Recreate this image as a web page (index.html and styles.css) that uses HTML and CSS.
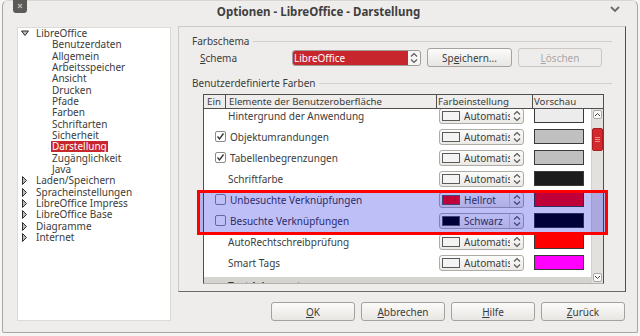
FILE: index.html
```html
<!DOCTYPE html>
<html lang="de">
<head>
  <meta charset="utf-8">
  <title>Optionen - LibreOffice - Darstellung</title>
  <link rel="stylesheet" href="styles.css">
</head>
<body>
  <div class="window">
    <div class="titlebar">
      <span class="close">
        <svg width="14" height="13" viewBox="0 0 14 13"><path d="M5 4 L9 8 M9 4 L5 8" stroke="#b9b7b4" stroke-width="1.2" fill="none"/></svg>
      </span>
      <span class="title">Optionen - LibreOffice - Darstellung</span>
      <svg class="chevron" width="10" height="6" viewBox="0 0 10 6"><path d="M1 1 L5 5 L9 1" stroke="#6b6a68" stroke-width="1.8" fill="none"/></svg>
    </div>

    <div class="main">
      <div class="tree">
        <div class="node"><svg class="tw" width="15" height="11" viewBox="0 0 15 11"><polygon points="0.5,3 7.5,3 4,7.5" fill="#bdbbb8" stroke="#2e2e2e"/></svg>LibreOffice</div>
        <div class="leaf">Benutzerdaten</div>
        <div class="leaf">Allgemein</div>
        <div class="leaf">Arbeitsspeicher</div>
        <div class="leaf">Ansicht</div>
        <div class="leaf">Drucken</div>
        <div class="leaf">Pfade</div>
        <div class="leaf">Farben</div>
        <div class="leaf">Schriftarten</div>
        <div class="leaf">Sicherheit</div>
        <div class="leaf"><span class="sel">Darstellung</span></div>
        <div class="leaf">Zugänglichkeit</div>
        <div class="leaf">Java</div>
        <div class="node"><svg class="tw" width="15" height="11" viewBox="0 0 15 11"><polygon points="1.5,1.5 5.5,5.5 1.5,9.5" fill="#bdbbb8" stroke="#2e2e2e"/></svg>Laden/Speichern</div>
        <div class="node"><svg class="tw" width="15" height="11" viewBox="0 0 15 11"><polygon points="1.5,1.5 5.5,5.5 1.5,9.5" fill="#bdbbb8" stroke="#2e2e2e"/></svg>Spracheinstellungen</div>
        <div class="node"><svg class="tw" width="15" height="11" viewBox="0 0 15 11"><polygon points="1.5,1.5 5.5,5.5 1.5,9.5" fill="#bdbbb8" stroke="#2e2e2e"/></svg>LibreOffice Impress</div>
        <div class="node"><svg class="tw" width="15" height="11" viewBox="0 0 15 11"><polygon points="1.5,1.5 5.5,5.5 1.5,9.5" fill="#bdbbb8" stroke="#2e2e2e"/></svg>LibreOffice Base</div>
        <div class="node"><svg class="tw" width="15" height="11" viewBox="0 0 15 11"><polygon points="1.5,1.5 5.5,5.5 1.5,9.5" fill="#bdbbb8" stroke="#2e2e2e"/></svg>Diagramme</div>
        <div class="node"><svg class="tw" width="15" height="11" viewBox="0 0 15 11"><polygon points="1.5,1.5 5.5,5.5 1.5,9.5" fill="#bdbbb8" stroke="#2e2e2e"/></svg>Internet</div>
      </div>

      <div class="right">
        <div class="page">
          <div class="section">Farbschema</div>
          <div class="schema-row">
            <span class="schema-label"><u>S</u>chema</span>
            <div class="combo">
              <span class="combo-text">LibreOffice</span>
              <span class="combo-spin"><svg width="8" height="12" viewBox="0 0 8 12"><path d="M1 4.5 L4 1.5 L7 4.5 M1 7.5 L4 10.5 L7 7.5" stroke="#555" stroke-width="1.1" fill="none"/></svg></span>
            </div>
            <button class="btn save">Sp<u>e</u>ichern...</button>
            <button class="btn delete" disabled><u>L</u>öschen</button>
          </div>

          <div class="section second">Benutzerdefinierte Farben</div>

          <div class="table">
            <div class="thead">
              <div class="th th-on">Ein</div>
              <div class="th th-name">Elemente der Benutzeroberfläche</div>
              <div class="th th-color">Farbeinstellung</div>
              <div class="th th-preview">Vorschau</div>
            </div>
            <div class="tbody">
              <div class="rows">
                <div class="row">
                  <div class="name plain">Hintergrund der Anwendung</div>
                  <div class="colorbox"><span class="swatch"></span><span class="cname">Automatisch</span><span class="cspin"><svg width="8" height="12" viewBox="0 0 8 12"><path d="M1 4.5 L4 1.5 L7 4.5 M1 7.5 L4 10.5 L7 7.5" stroke="#555" stroke-width="1.1" fill="none"/></svg></span></div>
                  <div class="preview" style="background:#ececec"></div>
                </div>
                <div class="row">
                  <div class="name"><span class="cb"><svg width="9" height="9" viewBox="0 0 9 9"><path d="M1.5 4.5 L3.5 7 L7.5 1.5" stroke="#333" stroke-width="1.3" fill="none"/></svg></span>Objektumrandungen</div>
                  <div class="colorbox"><span class="swatch"></span><span class="cname">Automatisch</span><span class="cspin"><svg width="8" height="12" viewBox="0 0 8 12"><path d="M1 4.5 L4 1.5 L7 4.5 M1 7.5 L4 10.5 L7 7.5" stroke="#555" stroke-width="1.1" fill="none"/></svg></span></div>
                  <div class="preview" style="background:#c0c0c0"></div>
                </div>
                <div class="row">
                  <div class="name"><span class="cb"><svg width="9" height="9" viewBox="0 0 9 9"><path d="M1.5 4.5 L3.5 7 L7.5 1.5" stroke="#333" stroke-width="1.3" fill="none"/></svg></span>Tabellenbegrenzungen</div>
                  <div class="colorbox"><span class="swatch"></span><span class="cname">Automatisch</span><span class="cspin"><svg width="8" height="12" viewBox="0 0 8 12"><path d="M1 4.5 L4 1.5 L7 4.5 M1 7.5 L4 10.5 L7 7.5" stroke="#555" stroke-width="1.1" fill="none"/></svg></span></div>
                  <div class="preview" style="background:#c0c0c0"></div>
                </div>
                <div class="row">
                  <div class="name plain">Schriftfarbe</div>
                  <div class="colorbox"><span class="swatch"></span><span class="cname">Automatisch</span><span class="cspin"><svg width="8" height="12" viewBox="0 0 8 12"><path d="M1 4.5 L4 1.5 L7 4.5 M1 7.5 L4 10.5 L7 7.5" stroke="#555" stroke-width="1.1" fill="none"/></svg></span></div>
                  <div class="preview" style="background:#1c1c1c"></div>
                </div>
                <div class="row">
                  <div class="name"><span class="cb"></span>Unbesuchte Verknüpfungen</div>
                  <div class="colorbox named"><span class="swatch" style="background:#ff0000"></span><span class="cname">Hellrot</span><span class="cspin"><svg width="8" height="12" viewBox="0 0 8 12"><path d="M1 4.5 L4 1.5 L7 4.5 M1 7.5 L4 10.5 L7 7.5" stroke="#555" stroke-width="1.1" fill="none"/></svg></span></div>
                  <div class="preview" style="background:#ff0000"></div>
                </div>
                <div class="row">
                  <div class="name"><span class="cb"></span>Besuchte Verknüpfungen</div>
                  <div class="colorbox named"><span class="swatch" style="background:#000000"></span><span class="cname">Schwarz</span><span class="cspin"><svg width="8" height="12" viewBox="0 0 8 12"><path d="M1 4.5 L4 1.5 L7 4.5 M1 7.5 L4 10.5 L7 7.5" stroke="#555" stroke-width="1.1" fill="none"/></svg></span></div>
                  <div class="preview" style="background:#000000"></div>
                </div>
                <div class="row">
                  <div class="name plain">AutoRechtschreibprüfung</div>
                  <div class="colorbox"><span class="swatch"></span><span class="cname">Automatisch</span><span class="cspin"><svg width="8" height="12" viewBox="0 0 8 12"><path d="M1 4.5 L4 1.5 L7 4.5 M1 7.5 L4 10.5 L7 7.5" stroke="#555" stroke-width="1.1" fill="none"/></svg></span></div>
                  <div class="preview" style="background:#ff0000"></div>
                </div>
                <div class="row">
                  <div class="name plain">Smart Tags</div>
                  <div class="colorbox"><span class="swatch"></span><span class="cname">Automatisch</span><span class="cspin"><svg width="8" height="12" viewBox="0 0 8 12"><path d="M1 4.5 L4 1.5 L7 4.5 M1 7.5 L4 10.5 L7 7.5" stroke="#555" stroke-width="1.1" fill="none"/></svg></span></div>
                  <div class="preview" style="background:#ff00ff"></div>
                </div>
                <div class="row group">
                  <div class="name plain">Textdokument</div>
                </div>
              </div>
              <div class="scrollbar">
                <div class="sb-btn"><svg width="7" height="5" viewBox="0 0 7 5"><path d="M1 4 L3.5 1.5 L6 4" stroke="#444" stroke-width="1" fill="none"/></svg></div>
                <div class="sb-thumb"><svg width="5" height="5" viewBox="0 0 5 5"><path d="M0 0.5 H5 M0 2.5 H5 M0 4.5 H5" stroke="#ee8a8c" stroke-width="1"/></svg></div>
                <div class="sb-btn down"><svg width="7" height="5" viewBox="0 0 7 5"><path d="M1 1 L3.5 3.5 L6 1" stroke="#444" stroke-width="1" fill="none"/></svg></div>
              </div>
            </div>
          </div>
        </div>

        <div class="buttons">
          <button class="btn"><u>O</u>K</button>
          <button class="btn"><u>A</u>bbrechen</button>
          <button class="btn"><u>H</u>ilfe</button>
          <button class="btn"><u>Z</u>urück</button>
        </div>
      </div>
    </div>
  </div>

  <div class="highlight"></div>
</body>
</html>
```

FILE: styles.css
```css
body {
  margin: 0;
  background: #f5f5f4;
  font-family: "Noto Sans", "DejaVu Sans", sans-serif;
  font-size: 10px;
  color: #3c3c3c;
}
.window {
  margin: 0 2px;
  height: 333px;
  box-sizing: border-box;
  background: #efedeb;
  border: 1px solid #a9a7a3;
  border-top-color: #d8d6d2;
  border-radius: 6px 6px 2px 2px;
}

/* title bar */
.titlebar {
  display: flex;
  align-items: flex-start;
  height: 25px;
}
.close {
  display: block;
  width: 14px;
  height: 13px;
  margin: -1px 0 0 10px;
  background: #5b5a57;
  border-radius: 0 0 3px 3px;
}
.close svg {
  display: block;
}
.title {
  flex: 1;
  text-align: center;
  font-weight: bold;
  font-size: 11.5px;
  line-height: 14px;
  padding-top: 4px;
  color: #3f3f3f;
}
.chevron {
  margin: 5px 17px 0 0;
}

/* layout */
.main {
  display: flex;
  padding-left: 14px;
  gap: 7px;
}
.tree {
  width: 154px;
  height: 294px;
  margin-top: 1px;
  box-sizing: border-box;
  background: #fff;
  border: 1px solid #dddbd7;
  line-height: 11.33px;
  white-space: nowrap;
}
.node {
  display: flex;
  align-items: center;
  height: 11.33px;
  padding-left: 3px;
}
.tw {
  flex: none;
}
.leaf {
  height: 11.33px;
  padding-left: 34px;
}
.sel {
  display: inline-block;
  background: #c8262d;
  color: #fff;
  padding: 0 1px;
  margin-left: -1px;
  line-height: 11px;
}

.right {
  display: flex;
  flex-direction: column;
}
.page {
  width: 448px;
  height: 266px;
  box-sizing: border-box;
  padding: 8px 13px 0;
  border: 1px solid #cdcac5;
  border-right-color: #4e4e4e;
  border-bottom-color: #6a6a6a;
}

/* group headers */
.section {
  display: flex;
  align-items: center;
  gap: 4px;
  height: 12px;
  line-height: 12px;
}
.section::after {
  content: "";
  flex: 1;
  height: 1px;
  background: #d3d0cc;
}
.section.second {
  margin-top: 10px;
}

.schema-row {
  display: flex;
  align-items: center;
  height: 19px;
  margin-top: 1px;
  padding-left: 8px;
}
.schema-label {
  width: 92px;
}
.combo {
  display: flex;
  width: 129px;
  height: 16px;
  box-sizing: border-box;
  border: 1px solid #a09c97;
  border-radius: 3px;
  overflow: hidden;
  background: #f7f6f5;
}
.combo-text {
  flex: 1;
  background: #c8262d;
  color: #fff;
  line-height: 14px;
  padding-left: 1px;
}
.combo-spin {
  width: 12px;
  display: flex;
  align-items: center;
  justify-content: center;
}

.btn {
  font-family: inherit;
  font-size: 10px;
  color: #3c3c3c;
  height: 19px;
  width: 84px;
  padding: 0;
  border: 1px solid #a5a29d;
  border-radius: 3px;
  background: linear-gradient(#fbfbfa, #e8e6e3);
}
.btn.save {
  margin-left: 6px;
  width: 85px;
}
.btn.delete {
  margin-left: 6px;
  color: #a9a7a4;
  border-color: #cac7c2;
  background: #efedeb;
}

/* table */
.table {
  margin: 5px 0 0 11px;
  width: 401px;
  box-sizing: border-box;
  border: 1px solid #4f4f4f;
  border-bottom-color: #b5b2ad;
}
.thead {
  display: flex;
  height: 13px;
  line-height: 13px;
  font-size: 9.7px;
  border-bottom: 1px solid #4f4f4f;
  white-space: nowrap;
}
.th {
  box-sizing: border-box;
  border-right: 1px solid #4f4f4f;
  overflow: hidden;
}
.th-on {
  width: 22px;
  padding-left: 3px;
}
.th-name {
  width: 211px;
  padding-left: 3px;
}
.th-color {
  width: 96px;
  padding-left: 1px;
}
.th-preview {
  flex: 1;
  border-right: none;
  padding-left: 1px;
}
.tbody {
  display: flex;
  height: 174px;
  overflow: hidden;
  background: #fff;
}
.rows {
  flex: 1;
  margin-top: -4px;
}
.row {
  display: grid;
  grid-template-columns: 233px 95px 1fr;
  align-items: center;
  height: 21px;
}
.name {
  display: flex;
  align-items: center;
  gap: 4px;
  padding-left: 11px;
  white-space: nowrap;
}
.name.plain {
  padding-left: 24px;
}
.cb {
  width: 11px;
  height: 11px;
  box-sizing: border-box;
  border: 1px solid #8d8a86;
  border-radius: 2px;
  background: #fff;
  display: flex;
  align-items: center;
  justify-content: center;
}
.cb svg {
  display: block;
}
.colorbox {
  display: flex;
  align-items: center;
  margin-left: 2px;
  width: 85px;
  height: 16px;
  box-sizing: border-box;
  border: 1px solid #aeaaa5;
  border-radius: 3px;
  background: linear-gradient(#fcfcfb, #ebe9e6);
  overflow: hidden;
}
.swatch {
  flex: none;
  width: 18px;
  height: 10px;
  margin-left: 2px;
  box-sizing: border-box;
  border: 1px solid #5a5a5a;
  background: #f4f4f4;
}
.cname {
  flex: 1;
  margin-left: 4px;
  overflow: hidden;
  white-space: nowrap;
}
.cspin {
  flex: none;
  width: 13px;
  height: 14px;
  display: flex;
  align-items: center;
  justify-content: center;
}
.named .cspin {
  border-left: 1px solid #cfccc7;
}
.preview {
  margin-left: 2px;
  width: 50px;
  height: 15px;
  box-sizing: border-box;
  border: 1px solid #3a3a3a;
}
.row.group {
  background: linear-gradient(#fff 4px, #d6d4d0 4px);
  font-weight: bold;
}
.row.group .name {
  padding-top: 5px;
}

/* scrollbar */
.scrollbar {
  display: flex;
  flex-direction: column;
  width: 11px;
  background: #e3e1de;
  border-left: 1px solid #d2cfcb;
}
.sb-btn {
  height: 9px;
  margin: 1px 1px 0;
  box-sizing: border-box;
  border: 1px solid #aaa7a2;
  border-radius: 2px;
  background: #fafafa;
  display: flex;
  align-items: center;
  justify-content: center;
}
.sb-btn.down {
  margin: auto 1px 1px;
}
.sb-thumb {
  height: 23px;
  margin: 9px 0 0;
  box-sizing: border-box;
  border: 1px solid #a81e23;
  border-radius: 2px;
  background: #d3282d;
  display: flex;
  align-items: center;
  justify-content: center;
}

.buttons {
  display: flex;
  justify-content: flex-end;
  gap: 6px;
  margin-top: 10px;
  padding-right: 1px;
}

/* annotation drawn over the screenshot */
.highlight {
  position: absolute;
  left: 197px;
  top: 190px;
  width: 411px;
  height: 45px;
  box-sizing: border-box;
  border: 3px solid #ff0000;
  background: rgba(0, 0, 227, 0.25);
}
```
